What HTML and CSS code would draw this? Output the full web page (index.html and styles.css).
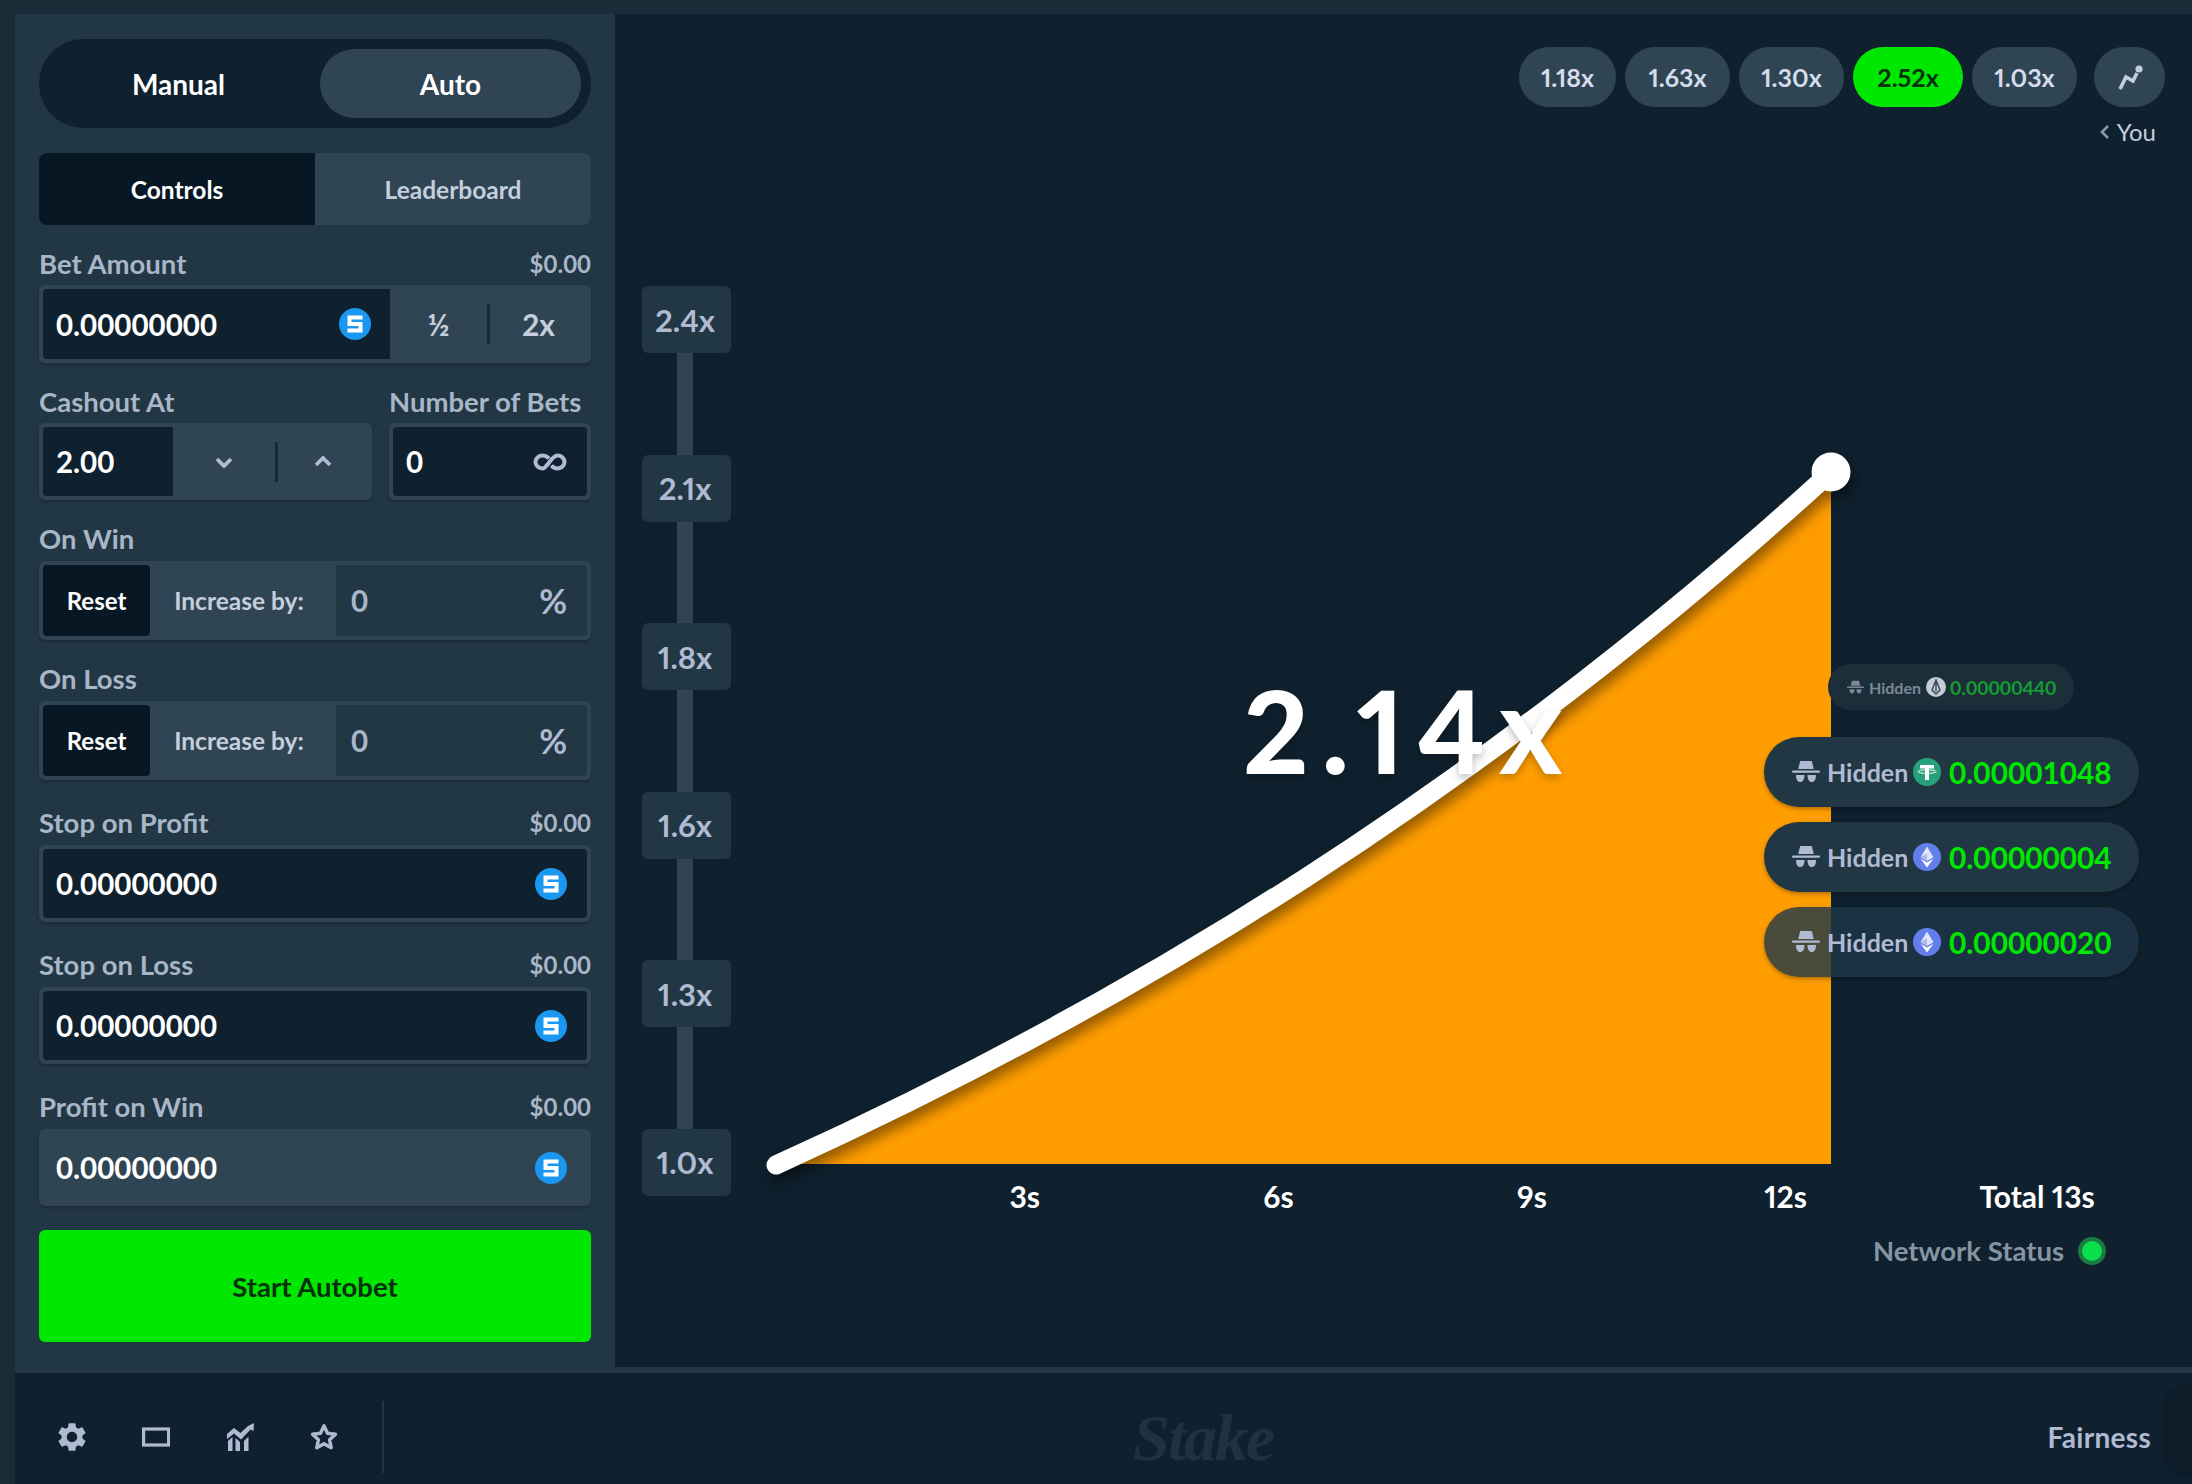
FILE: index.html
```html
<!DOCTYPE html>
<html lang="en">

<head>
  <meta charset="UTF-8">
  <meta name="viewport" content="width=device-width, initial-scale=1.0">
  <title>Crash</title>
  <link rel="stylesheet" href="styles.css">
</head>

<body>

  <svg class="sprite" width="0" height="0">
    <symbol id="coin-s" viewBox="0 0 32 32">
      <circle cx="16" cy="16" r="16" fill="#1a97f0"/>
      <path d="M23.500 9.500H10.500V16H21.500V22.500H8.500" fill="none" stroke="#fff" stroke-width="4"/>
    </symbol>
    <symbol id="coin-usdt" viewBox="0 0 28 28">
      <circle cx="14" cy="14" r="14" fill="#26a17b"/>
      <path d="M7 7h14v3.600h-5v11.400h-4V10.600H7z" fill="#fff"/>
      <ellipse cx="14" cy="13.600" rx="9" ry="1.800" fill="none" stroke="#fff" stroke-width="1"/>
    </symbol>
    <symbol id="coin-eth" viewBox="0 0 28 28">
      <circle cx="14" cy="14" r="14" fill="#627eea"/>
      <path d="M14 3.500 7.600 14.200 14 18l6.400-3.800z" fill="#dfe5fb"/>
      <path d="M14 19.600 7.600 15.800 14 24.500l6.400-8.700z" fill="#fff"/>
      <path d="M14 10.400 7.600 14.200 14 18z" fill="#aab8f3"/>
    </symbol>
    <symbol id="coin-eos" viewBox="0 0 20 20">
      <circle cx="10" cy="10" r="10" fill="#c5ccd6"/>
      <path d="M10 3 6 13l4 4 4-4zM10 5.500v9" fill="none" stroke="#3a4a56" stroke-width="1.400"/>
    </symbol>
    <symbol id="spy" viewBox="0 0 28 24">
      <path d="M8.200 1h11.600l2 8H6.200z" fill="currentColor"/>
      <rect x="0" y="10.500" width="28" height="2.200" rx="1" fill="currentColor"/>
      <path d="M4 15h8.500c0 4.500-1.600 7-4.300 7S4 19.500 4 15zM15.500 15H24c0 4.500-1.600 7-4.200 7s-4.300-2.500-4.300-7z" fill="currentColor"/>
    </symbol>
  </svg>

  <div class="game">
    <aside class="sidebar">
      <div class="mode-toggle">
        <div class="mode-btn">Manual</div>
        <div class="mode-btn active">Auto</div>
      </div>

      <div class="tabs">
        <div class="tab active">Controls</div>
        <div class="tab">Leaderboard</div>
      </div>

      <div class="field">
        <div class="field-label"><span>Bet Amount</span><span>$0.00</span></div>
        <div class="group">
          <div class="input input-bet">
            <span>0.00000000</span>
            <svg class="coin"><use href="#coin-s"/></svg>
          </div>
          <div class="group-btn">½</div>
          <div class="group-sep"></div>
          <div class="group-btn">2x</div>
        </div>
      </div>

      <div class="field-row">
        <div class="field cashout">
          <div class="field-label"><span>Cashout At</span></div>
          <div class="group group-short">
            <div class="input input-cashout"><span>2.00</span></div>
            <div class="group-btn group-btn-down">
              <svg class="chevron" viewBox="0 0 18 12"><path d="M2 3l7 7 7-7"/></svg>
            </div>
            <div class="group-sep"></div>
            <div class="group-btn">
              <svg class="chevron" viewBox="0 0 18 12"><path d="M2 9l7-7 7 7"/></svg>
            </div>
          </div>
        </div>
        <div class="field bets">
          <div class="field-label"><span>Number of Bets</span></div>
          <div class="group group-short">
            <div class="input">
              <span>0</span>
              <svg class="infinity" viewBox="0 0 34 18">
                <path d="M16 5.500C14 3.300 12 2.500 9.500 2.500 5.500 2.500 2.500 5.500 2.500 9s3 6.500 7 6.500c4.500 0 9-13 15-13 4 0 7 3 7 6.500s-3 6.500-7 6.500c-2.500 0-4.500-1-6-3"/>
              </svg>
            </div>
          </div>
        </div>
      </div>

      <div class="field field-on">
        <div class="field-label"><span>On Win</span></div>
        <div class="group group-on">
          <div class="reset-btn">Reset</div>
          <div class="increase">Increase by:</div>
          <div class="input input-off"><span>0</span><span class="percent">%</span></div>
        </div>
      </div>

      <div class="field field-on">
        <div class="field-label"><span>On Loss</span></div>
        <div class="group group-on">
          <div class="reset-btn">Reset</div>
          <div class="increase">Increase by:</div>
          <div class="input input-off"><span>0</span><span class="percent">%</span></div>
        </div>
      </div>

      <div class="field field-stop">
        <div class="field-label"><span>Stop on Profit</span><span>$0.00</span></div>
        <div class="group group-short">
          <div class="input"><span>0.00000000</span><svg class="coin"><use href="#coin-s"/></svg></div>
        </div>
      </div>

      <div class="field field-stop">
        <div class="field-label"><span>Stop on Loss</span><span>$0.00</span></div>
        <div class="group group-short">
          <div class="input"><span>0.00000000</span><svg class="coin"><use href="#coin-s"/></svg></div>
        </div>
      </div>

      <div class="field field-stop">
        <div class="field-label"><span>Profit on Win</span><span>$0.00</span></div>
        <div class="group group-short">
          <div class="input input-plain"><span>0.00000000</span><svg class="coin"><use href="#coin-s"/></svg></div>
        </div>
      </div>

      <div class="start-btn">Start Autobet</div>
    </aside>

    <main class="chart">
      <svg class="plot" viewBox="615 14 1577 1353">
        <path class="plot-fill" d="M776 1164C1127.700 1005.500 1479.300 793.200 1831 472V1164z"/>
        <g class="plot-line">
          <path d="M776 1165C1127.700 1005.500 1479.300 793.200 1831 472"/>
          <circle cx="1831" cy="472" r="19.500"/>
        </g>
      </svg>

      <div class="history">
        <div class="pill">1.18x</div>
        <div class="pill">1.63x</div>
        <div class="pill">1.30x</div>
        <div class="pill win">2.52x</div>
        <div class="pill">1.03x</div>
        <div class="pill pill-icon">
          <svg viewBox="0 -3 26 26"><path d="M3 22 9 10l7 4 4-8" fill="none" stroke="currentColor" stroke-width="3.600"/><circle cx="22" cy="2" r="3.600" fill="currentColor"/></svg>
        </div>
      </div>
      <div class="you">
        <svg class="you-arrow" viewBox="0 0 10 16"><path d="M8 2 2 8l6 6"/></svg>
        <span>You</span>
      </div>

      <div class="y-axis">
        <div class="y-tick">2.4x</div>
        <div class="y-tick">2.1x</div>
        <div class="y-tick">1.8x</div>
        <div class="y-tick">1.6x</div>
        <div class="y-tick">1.3x</div>
        <div class="y-tick">1.0x</div>
      </div>

      <div class="multiplier">2.14<span class="multiplier-x">x</span></div>

      <div class="players">
        <div class="player player-small">
          <svg class="spy"><use href="#spy"/></svg>
          <span class="player-name">Hidden</span>
          <svg class="player-coin"><use href="#coin-eos"/></svg>
          <span class="player-amount">0.00000440</span>
        </div>
        <div class="player">
          <svg class="spy"><use href="#spy"/></svg>
          <span class="player-name">Hidden</span>
          <svg class="player-coin"><use href="#coin-usdt"/></svg>
          <span class="player-amount">0.00001048</span>
        </div>
        <div class="player">
          <svg class="spy"><use href="#spy"/></svg>
          <span class="player-name">Hidden</span>
          <svg class="player-coin"><use href="#coin-eth"/></svg>
          <span class="player-amount">0.00000004</span>
        </div>
        <div class="player player-fade">
          <svg class="spy"><use href="#spy"/></svg>
          <span class="player-name">Hidden</span>
          <svg class="player-coin"><use href="#coin-eth"/></svg>
          <span class="player-amount">0.00000020</span>
        </div>
      </div>

      <div class="x-axis">
        <div class="x-tick">3s</div>
        <div class="x-tick">6s</div>
        <div class="x-tick">9s</div>
        <div class="x-tick">12s</div>
        <div class="x-total">Total 13s</div>
      </div>

      <div class="network">
        <span>Network Status</span>
        <div class="network-dot"></div>
      </div>
    </main>
  </div>

  <footer class="footer">
    <div class="footer-icons">
      <svg class="footer-icon" viewBox="2.300 2.300 19.400 19.400"><path fill="currentColor" fill-rule="evenodd" d="M19.140 12.940c.04-.3.06-.61.06-.94 0-.32-.02-.64-.07-.94l2.030-1.580c.18-.14.23-.41.12-.61l-1.920-3.320c-.12-.22-.37-.29-.59-.22l-2.390.96c-.5-.38-1.030-.7-1.620-.94l-.36-2.540c-.04-.24-.24-.41-.48-.41h-3.840c-.24 0-.43.17-.47.41l-.36 2.540c-.59.24-1.130.57-1.620.94l-2.390-.96c-.22-.08-.47 0-.59.22L2.740 8.870c-.12.21-.08.47.12.61l2.030 1.580c-.05.3-.09.63-.09.94s.02.64.07.94l-2.030 1.580c-.18.14-.23.41-.12.61l1.920 3.320c.12.22.37.29.59.22l2.390-.96c.5.38 1.030.7 1.620.94l.36 2.540c.05.24.24.41.48.41h3.840c.24 0 .44-.17.47-.41l.36-2.540c.59-.24 1.130-.56 1.620-.94l2.390.96c.22.08.47 0 .59-.22l1.920-3.320c.12-.22.07-.47-.12-.61l-2.010-1.580zM12 15.600c-1.980 0-3.600-1.620-3.600-3.600s1.620-3.600 3.600-3.600 3.600 1.620 3.600 3.600-1.620 3.600-3.600 3.600z"/></svg>
      <svg class="footer-icon" viewBox="0 0 28 28"><rect x="1.600" y="6" width="25" height="16" fill="none" stroke="currentColor" stroke-width="3.200"/></svg>
      <svg class="footer-icon" viewBox="0 0 28 28"><path fill="currentColor" d="M1 11 8 5l6.500 5L22 3l6-3-.5 8-3-1.500-9.500 10-7-6L1 16zM2 18l4.500-4V28H2zM9.500 15l4.500 4v9H9.500zM18 18l4.500-4.500V28H18z"/></svg>
      <svg class="footer-icon" viewBox="0 0 28 28"><path fill="none" stroke="currentColor" stroke-width="3.400" stroke-linejoin="round" d="M14 2.800l3.500 7.400 8 1-5.900 5.500 1.600 8-7.200-4-7.200 4 1.600-8-5.900-5.500 8-1z"/></svg>
    </div>
    <div class="footer-sep"></div>
    <div class="logo">Stake</div>
    <div class="fairness">Fairness</div>
    <div class="corner-shade"></div>
  </footer>

</body>

</html>
```

FILE: styles.css
```css
html,
body {
  margin: 0;
  padding: 0;
}

body {
  width: 2192px;
  height: 1484px;
  overflow: hidden;
  background-color: #1a2c38;
  color: #fff;
  font-family: 'Lato', 'Liberation Sans', sans-serif;
  font-weight: 700;
}

.sprite {
  position: absolute;
}

.game {
  display: flex;
  height: 1359px;
  margin: 14px 0 0 15px;
  background-color: #213743;
}

/* panel izquierdo */
.sidebar {
  flex: none;
  box-sizing: border-box;
  width: 600px;
  padding: 25px 24px;
}

.mode-toggle {
  display: flex;
  box-sizing: border-box;
  height: 89px;
  padding: 10px;
  background-color: #0f212e;
  border-radius: 45px;
  font-size: 28px;
}

.mode-btn {
  flex: 1;
  display: flex;
  align-items: center;
  justify-content: center;
  padding-right: 12px;
  border-radius: 35px;
}

.mode-btn.active {
  flex: none;
  width: 261px;
  padding-right: 0;
  background-color: #2f4553;
}

.tabs {
  display: flex;
  height: 72px;
  margin-top: 25px;
  font-size: 24.5px;
  color: #c5cedd;
}

.tab {
  flex: 1;
  display: flex;
  align-items: center;
  justify-content: center;
  background-color: #2f4553;
  border-radius: 0 8px 8px 0;
}

.tab.active {
  flex: none;
  width: 276px;
  background-color: #071824;
  border-radius: 8px 0 0 8px;
  color: #fff;
}

.field {
  margin-top: 23px;
}

.field-label {
  display: flex;
  justify-content: space-between;
  align-items: center;
  height: 30px;
  margin-bottom: 7px;
  font-size: 27.5px;
  color: #a9b6c9;
}

.field-label span + span {
  font-size: 24px;
}

.group {
  display: flex;
  align-items: center;
  box-sizing: border-box;
  height: 78px;
  padding: 4px;
  background-color: #2f4553;
  border-radius: 6px;
  box-shadow: 0 2px 3px rgba(0, 0, 0, 0.2);
}

.group-short {
  height: 77px;
}

.input {
  flex: 1;
  display: flex;
  align-items: center;
  justify-content: space-between;
  box-sizing: border-box;
  height: 100%;
  padding: 0 20px 0 13px;
  background-color: #0f212e;
  border-radius: 4px;
  font-size: 29.5px;
  color: #fff;
}

.input-bet {
  flex: none;
  width: 347px;
  padding-right: 19px;
  border-radius: 4px 0 0 4px;
}

.input-cashout {
  flex: none;
  width: 130px;
  border-radius: 4px 0 0 4px;
}

.input-off {
  background-color: #213743;
  color: #a9b6c9;
  padding-left: 15px;
  border-radius: 0 4px 4px 0;
}

.input-plain {
  background-color: transparent;
}

.coin {
  flex: none;
  width: 32px;
  height: 32px;
}

.group-btn {
  flex: 1;
  display: flex;
  align-items: center;
  justify-content: center;
  font-size: 30px;
  color: #c5cedd;
}

.group-btn-down {
  flex: none;
  width: 102px;
}

.group-sep {
  flex: none;
  width: 3px;
  height: 40px;
  background-color: #152a38;
}

.chevron {
  width: 18px;
  height: 12px;
  fill: none;
  stroke: #b1bad3;
  stroke-width: 3.8;
}

.field-row {
  display: flex;
  gap: 17px;
}

.cashout {
  flex: none;
  width: 333px;
}

.bets {
  flex: 1;
}

.infinity {
  width: 34px;
  height: 18px;
  fill: none;
  stroke: #b1bad3;
  stroke-width: 4;
}

.field-on .field-label {
  margin-bottom: 8px;
}

.group-on {
  height: 79px;
}

.reset-btn {
  flex: none;
  display: flex;
  align-items: center;
  justify-content: center;
  width: 107px;
  height: 100%;
  background-color: #071824;
  border-radius: 4px;
  font-size: 24px;
}

.increase {
  flex: none;
  box-sizing: border-box;
  width: 186px;
  padding-right: 8px;
  text-align: center;
  font-size: 24.5px;
  color: #c5cedd;
}

.percent {
  font-size: 34px;
  color: #b1bad3;
}

.field-stop {
  margin-top: 27px;
}

.field-stop .field-label {
  margin-bottom: 8px;
}

.start-btn {
  display: flex;
  align-items: center;
  justify-content: center;
  height: 112px;
  margin-top: 24px;
  background-color: #00e701;
  border-radius: 6px;
  font-size: 27.5px;
  color: #05300a;
}

/* zona del grafico */
.chart {
  position: relative;
  flex: 1;
  height: 1353px;
  background-color: #0f212e;
}

.plot {
  position: absolute;
  left: 0;
  top: 0;
  width: 1577px;
  height: 1353px;
}

.plot-fill {
  fill: #ff9d00;
}

.plot-line {
  filter: drop-shadow(3px 8px 7px rgba(0, 0, 0, 0.45));
}

.plot-line path {
  fill: none;
  stroke: #fff;
  stroke-width: 19;
  stroke-linecap: round;
}

.plot-line circle {
  fill: #fff;
}

.history {
  position: relative;
  display: flex;
  justify-content: flex-end;
  gap: 9px;
  padding: 33px 27px 0 0;
  font-feature-settings: "pnum";
}

.pill {
  display: flex;
  align-items: center;
  justify-content: center;
  box-sizing: border-box;
  width: 105px;
  height: 60px;
  background-color: #2f4553;
  border-radius: 30px;
  font-size: 25px;
  color: #d5dceb;
}

.pill:first-child {
  width: 97px;
}

.pill.win {
  width: 110px;
  background-color: #00e701;
  color: #05300a;
}

.pill-icon {
  width: 71px;
  margin-left: 8px;
  color: #c5cedd;
}

.pill-icon svg {
  width: 26px;
  height: 26px;
}

.you {
  position: relative;
  display: flex;
  align-items: center;
  justify-content: flex-end;
  gap: 7px;
  padding: 10px 36px 0 0;
  font-size: 24px;
  font-weight: 400;
  color: #c5cedd;
}

.you-arrow {
  width: 10px;
  height: 16px;
  fill: none;
  stroke: #8a98a8;
  stroke-width: 2.6;
}

.y-axis {
  position: absolute;
  left: 27px;
  top: 272px;
  display: flex;
  flex-direction: column;
  justify-content: space-between;
  width: 89px;
  height: 910px;
  font-feature-settings: "pnum";
}

.y-axis::before {
  content: "";
  position: absolute;
  left: 35px;
  top: 0;
  bottom: 0;
  width: 16px;
  background-color: #2f4553;
}

.y-tick {
  position: relative;
  display: flex;
  align-items: center;
  justify-content: center;
  box-sizing: border-box;
  height: 67px;
  padding-right: 3px;
  background-color: #213743;
  border-radius: 6px;
  font-size: 31px;
  color: #b1bad3;
}

.multiplier {
  position: absolute;
  left: 628px;
  top: 648px;
  font-size: 114px;
  line-height: 130px;
  font-weight: 900;
  letter-spacing: 13px;
  font-feature-settings: "pnum";
  text-shadow: 0 4px 8px rgba(0, 0, 0, 0.25);
}

.multiplier-x {
  font-size: 122px;
  font-weight: 700;
}

.players {
  position: absolute;
  left: 1149px;
  top: 650px;
  display: flex;
  flex-direction: column;
  align-items: flex-start;
  gap: 15px;
}

.player {
  display: flex;
  align-items: center;
  box-sizing: border-box;
  width: 375px;
  height: 70px;
  padding-left: 28px;
  background-color: #213743;
  border-radius: 35px;
  box-shadow: 0 2px 4px rgba(0, 0, 0, 0.3);
  font-size: 25px;
}

.player-fade {
  background-color: rgba(30, 55, 75, 0.8);
}

.spy {
  flex: none;
  width: 28px;
  height: 24px;
  color: #b1bad3;
}

.player-name {
  width: 86px;
  margin-left: 7px;
  color: #b1bad3;
}

.player-coin {
  flex: none;
  width: 28px;
  height: 28px;
}

.player-amount {
  margin-left: 8px;
  font-size: 29.8px;
  color: #00e701;
}

.player-small {
  width: 246px;
  height: 46px;
  margin-left: 64px;
  margin-bottom: 12px;
  padding-left: 19px;
  font-size: 16px;
  background-color: #1b2e3a;
  box-shadow: none;
}

.player-small .spy {
  width: 17px;
  height: 15px;
  color: #7c8896;
}

.player-small .player-name {
  width: 57px;
  margin-left: 5px;
  color: #7c8896;
}

.player-small .player-coin {
  width: 20px;
  height: 20px;
}

.player-small .player-amount {
  margin-left: 4px;
  font-size: 19.5px;
  color: #169a33;
}

.x-axis {
  position: absolute;
  left: 283px;
  top: 1163px;
  display: flex;
  align-items: center;
  height: 38px;
  font-size: 30px;
  font-feature-settings: "pnum";
}

.x-tick {
  width: 253.6px;
  text-align: center;
}

.x-total {
  margin-left: 67px;
}

.network {
  position: absolute;
  right: 86px;
  top: 1220px;
  display: flex;
  align-items: center;
  gap: 14px;
  font-size: 27.5px;
  color: #8794a1;
}

.network-dot {
  box-sizing: border-box;
  width: 28px;
  height: 28px;
  background-color: #0adf4c;
  border: 4px solid #1a7a40;
  border-radius: 50%;
}

/* barra inferior */
.footer {
  position: relative;
  display: flex;
  align-items: center;
  box-sizing: border-box;
  height: 111px;
  padding-top: 17px;
  margin-left: 15px;
  background-color: #0f212e;
}

.footer-icons {
  display: flex;
  gap: 56px;
  margin-left: 43px;
  color: #b1bad3;
}

.footer-icon {
  width: 28px;
  height: 28px;
}

.footer-sep {
  width: 2px;
  height: 72px;
  margin-left: 44px;
  background-color: #213743;
}

.logo {
  position: absolute;
  left: 1118px;
  top: 25px;
  font-family: 'Liberation Serif', serif;
  font-style: italic;
  font-weight: 700;
  font-size: 66px;
  line-height: 80px;
  letter-spacing: -2px;
  color: #1d3340;
}

.fairness {
  margin-left: auto;
  margin-right: 41px;
  font-size: 28px;
  letter-spacing: 0.3px;
  color: #b1bad3;
}

.corner-shade {
  position: absolute;
  right: 0;
  top: 10px;
  width: 30px;
  height: 95px;
  background-color: #0d1e2a;
  border-radius: 24px 0 0 24px;
}
```
